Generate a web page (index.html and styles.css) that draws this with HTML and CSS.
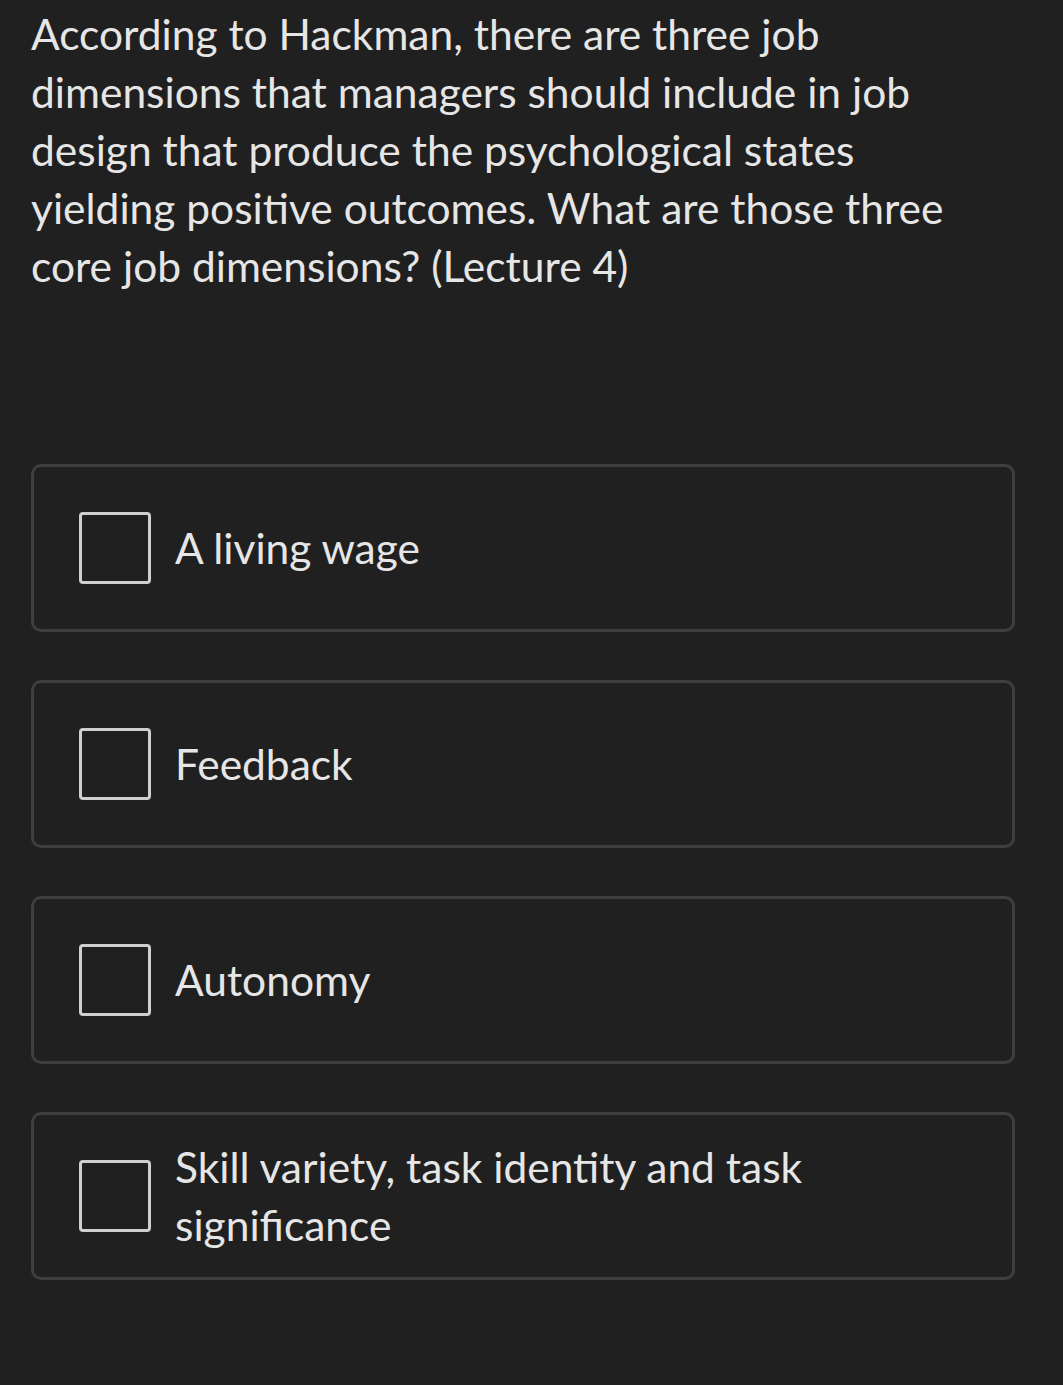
FILE: index.html
```html
<!DOCTYPE html>
<html lang="en">
  <head>
    <meta charset="UTF-8" />
    <meta name="viewport" content="width=device-width, initial-scale=1.0" />
    <title>Question</title>
    <link rel="stylesheet" href="styles.css">
  </head>
  <body>
    <main class="quiz">
      <p class="spoergsmaal">
        According to Hackman, there are three job dimensions that managers should include in job design that produce the psychological states yielding positive outcomes. What are those three core job dimensions? (Lecture 4)
      </p>
      <section class="svar">
        <label class="mulighed">
          <span class="boks"></span>
          <span class="tekst">A living wage</span>
        </label>
        <label class="mulighed">
          <span class="boks"></span>
          <span class="tekst">Feedback</span>
        </label>
        <label class="mulighed">
          <span class="boks"></span>
          <span class="tekst">Autonomy</span>
        </label>
        <label class="mulighed">
          <span class="boks"></span>
          <span class="tekst">Skill variety, task identity and task significance</span>
        </label>
      </section>
    </main>
  </body>
</html>
```

FILE: styles.css
```css
html,
body {
  margin: 0;
  background-color: #202020;
}

body {
  font-family: Lato, "Liberation Sans", sans-serif;
  color: #e6e6e6;
  min-height: 1385px;
}

.quiz {
  width: 984px;
  padding: 5px 0 0 31px;
}

.spoergsmaal {
  margin: 0;
  width: 950px;
  font-size: 42.5px;
  line-height: 58px;
}

.svar {
  display: flex;
  flex-direction: column;
  gap: 48px;
  margin-top: 169px;
}

.mulighed {
  display: flex;
  align-items: center;
  gap: 24px;
  height: 162px;
  padding: 0 45px;
  border: 3px solid #3e3e3e;
  border-radius: 10px;
  cursor: pointer;
}

.boks {
  flex: none;
  width: 66px;
  height: 66px;
  border: 3px solid #cfcfcf;
  border-radius: 4px;
}

.tekst {
  font-size: 42.5px;
  line-height: 58px;
}
```
